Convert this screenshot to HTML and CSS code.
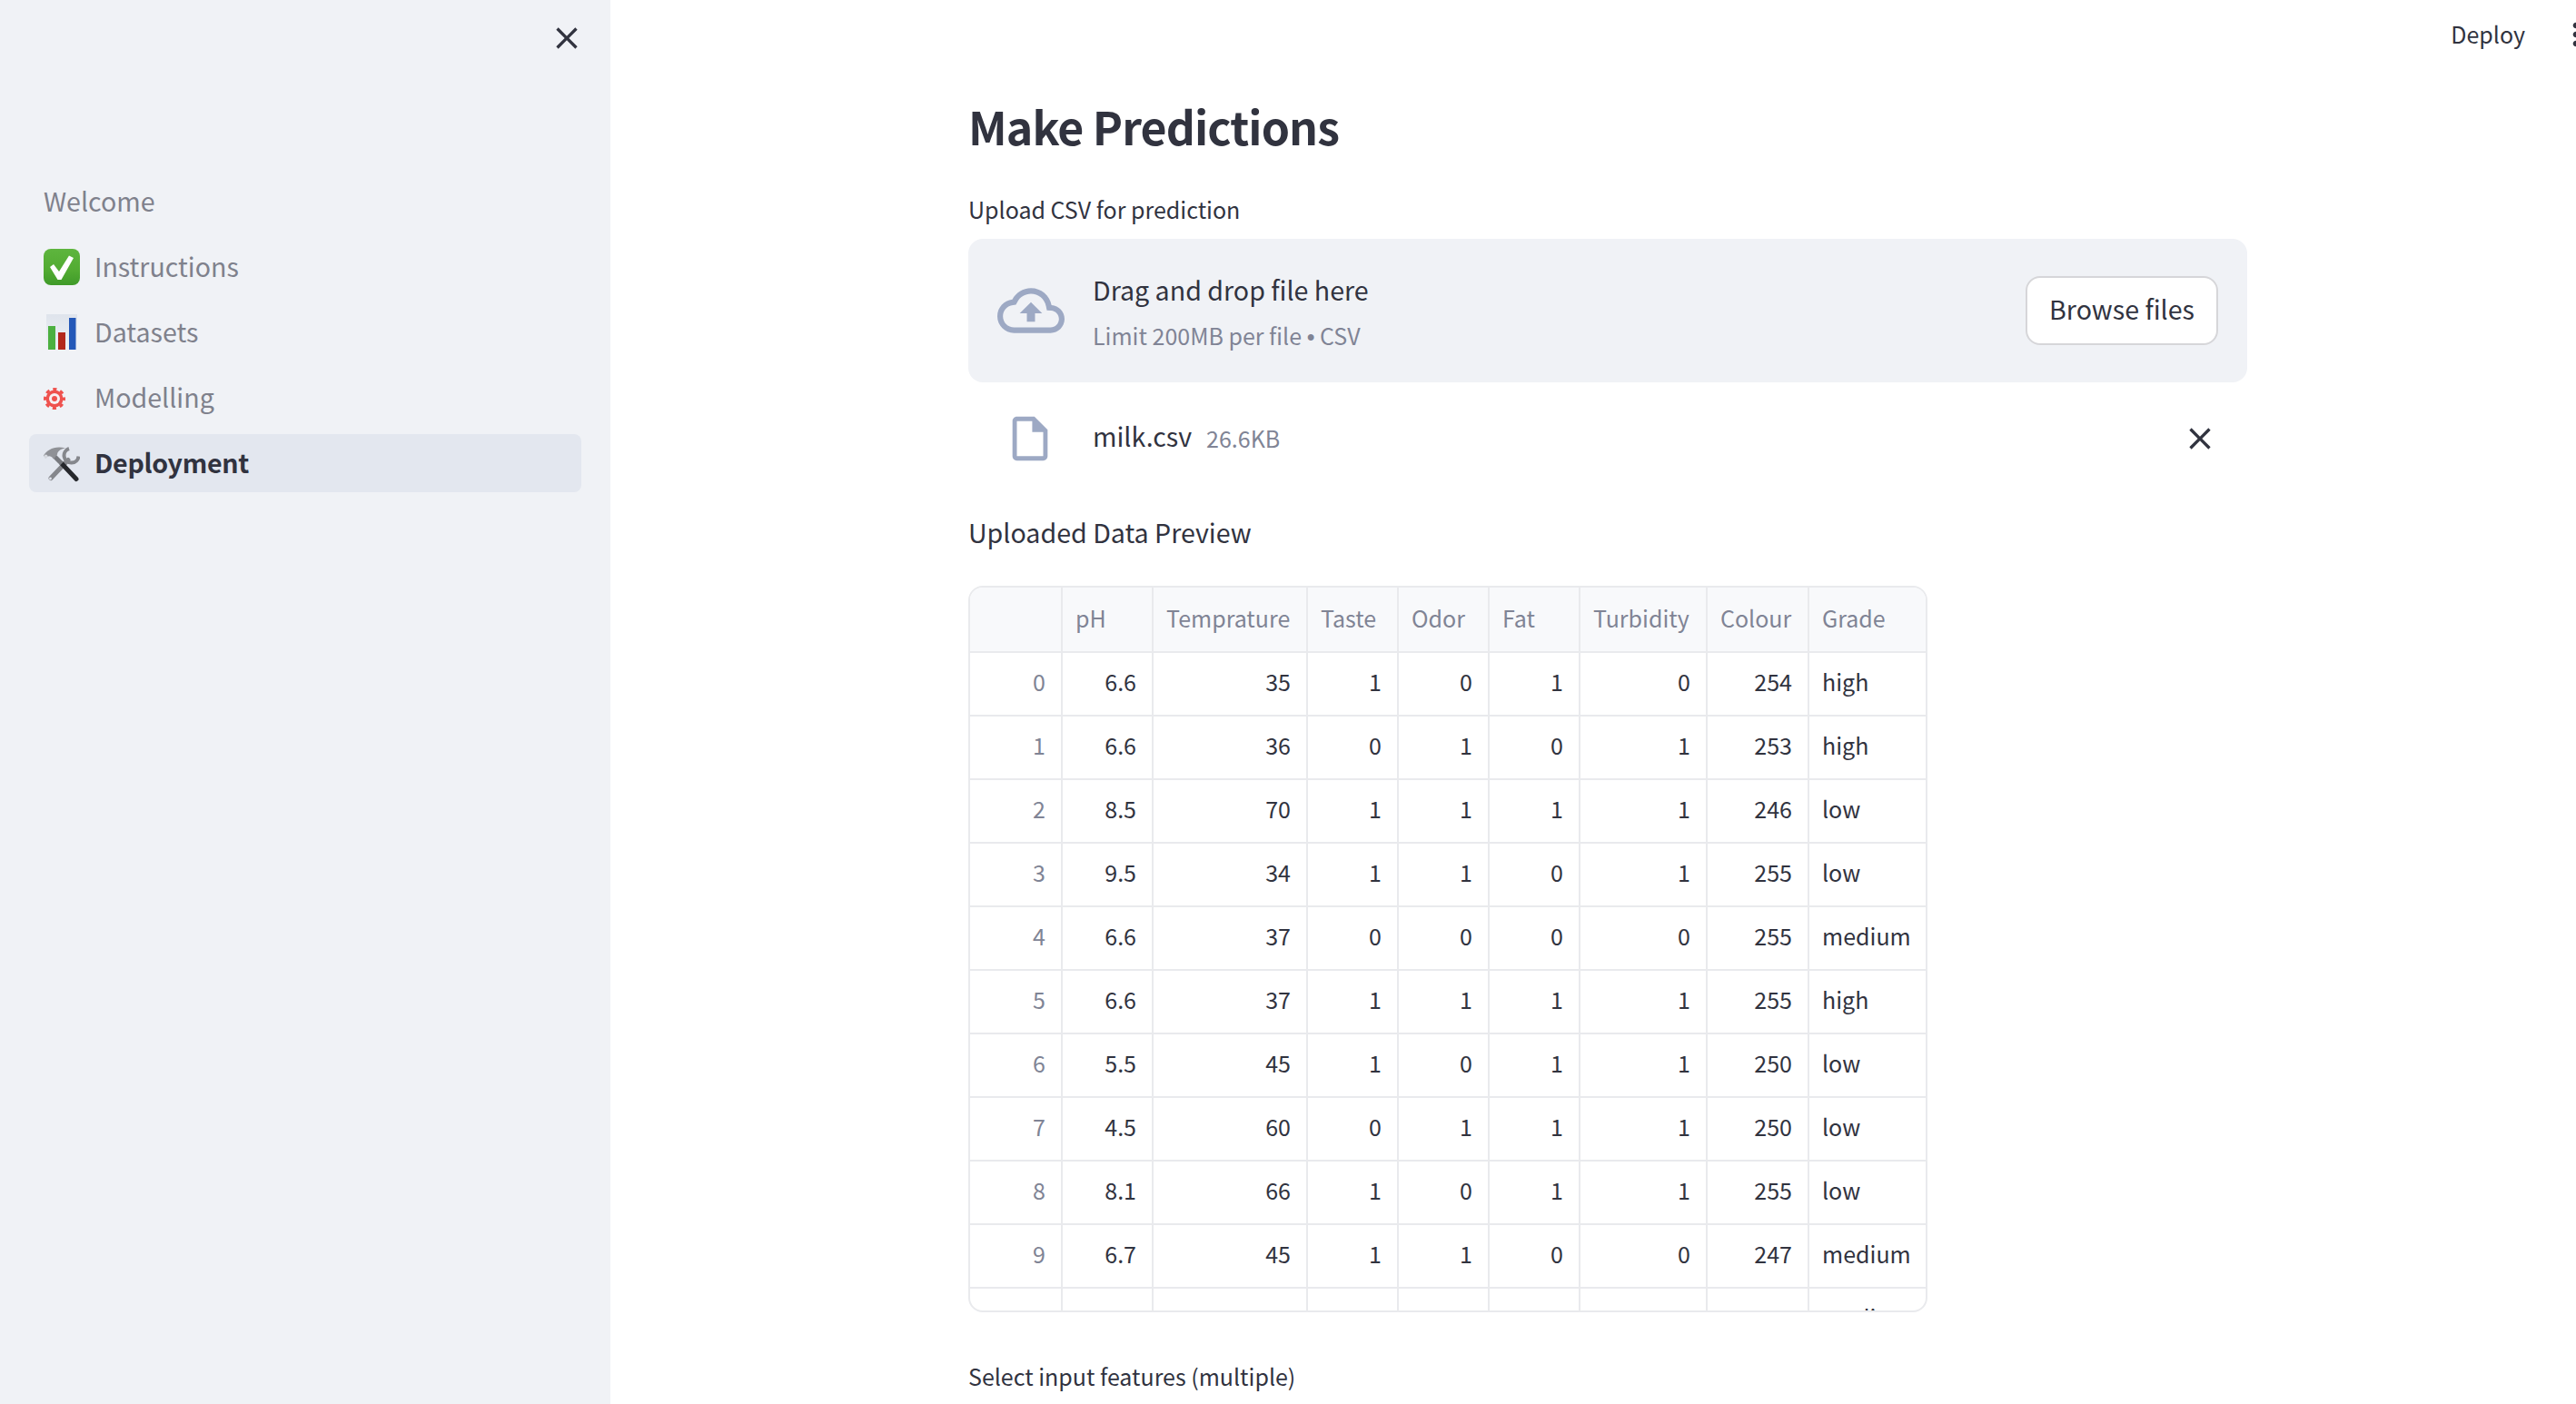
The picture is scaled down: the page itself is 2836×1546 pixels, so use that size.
FILE: index.html

```html
<!DOCTYPE html>
<html lang="en">
<head>
  <meta charset="UTF-8" />
  <title>Make Predictions</title>
  <link rel="stylesheet" href="styles.css">
</head>
<body>
  <div class="app">
    <aside class="sidebar">
      <div class="sidebar-head">
        <svg class="icon-close" viewBox="0 0 24 24"><path d="M19 6.41 17.59 5 12 10.59 6.41 5 5 6.41 10.59 12 5 17.59 6.41 19 12 13.41 17.59 19 19 17.59 13.41 12z"/></svg>
      </div>
      <nav class="nav">
        <a class="nav-item">Welcome</a>
        <a class="nav-item">
          <span class="emoji">
            <svg viewBox="0 0 40 40" width="40" height="40">
              <defs><linearGradient id="checkbg" x1="0" y1="0" x2="0" y2="1"><stop offset="0" stop-color="#5eb53e"/><stop offset="0.6" stop-color="#52ab32"/><stop offset="1" stop-color="#3f9a29"/></linearGradient></defs>
              <rect width="40" height="40" rx="8" fill="url(#checkbg)"/>
              <path d="M7 20l4-3 6 8 11-17.500 5 2.500-13.500 24h-4z" fill="#fff"/>
            </svg>
          </span>
          Instructions
        </a>
        <a class="nav-item">
          <span class="emoji">
            <svg viewBox="0 0 40 40" width="40" height="40">
              <defs><linearGradient id="chartbg" x1="0" y1="0" x2="0" y2="1"><stop offset="0" stop-color="#dfe4ec"/><stop offset="1" stop-color="#eef1f6"/></linearGradient></defs>
              <rect x="3" y="0" width="34" height="39" fill="url(#chartbg)"/>
              <rect x="5" y="13" width="8" height="26" fill="#4cb040"/>
              <rect x="16" y="20" width="8" height="19" fill="#b3281c"/>
              <rect x="28" y="4" width="7.500" height="35" fill="#2458b8"/>
            </svg>
          </span>
          Datasets
        </a>
        <a class="nav-item">
          <span class="emoji">
            <svg viewBox="0 0 40 40" width="40" height="40">
              <circle cx="12" cy="21" r="10.500" fill="none" stroke="#ef524e" stroke-width="3" stroke-dasharray="4.200 4.050" stroke-dashoffset="2.100"/>
              <circle cx="12" cy="21" r="9.500" fill="#ef524e"/>
              <circle cx="12" cy="21" r="6" fill="#f7f1f3"/>
              <circle cx="12" cy="21" r="3" fill="#ef524e"/>
            </svg>
          </span>
          Modelling
        </a>
        <a class="nav-item active">
          <span class="emoji">
            <svg viewBox="0 0 40 40" width="40" height="41">
              <path d="M28 3.500A8 8 0 1 0 38.500 12" fill="none" stroke="#85878c" stroke-width="4"/>
              <line x1="27" y1="16" x2="8" y2="36" stroke="#85878c" stroke-width="5" stroke-linecap="round"/>
              <circle cx="7.500" cy="36.500" r="1.400" fill="#e3e7ef"/>
              <line x1="20" y1="20" x2="36" y2="37" stroke="#26282c" stroke-width="5" stroke-linecap="round"/>
              <line x1="12" y1="12" x2="20" y2="20" stroke="#77797e" stroke-width="5"/>
              <path d="M0 11C4 5 12 0 24 3C18 4 15 7 15 10l-4 5C8 11 5 11 2 14z" fill="#8f9196"/>
              <circle cx="2.500" cy="12" r="2" fill="#d5d8de"/>
            </svg>
          </span>
          Deployment
        </a>
      </nav>
    </aside>

    <main class="main">
      <header class="topbar">
        <span class="deploy">Deploy</span>
        <svg class="icon-more" viewBox="0 0 24 24"><path d="M12 8c1.100 0 2-.9 2-2s-.9-2-2-2-2 .9-2 2 .9 2 2 2zm0 2c-1.100 0-2 .9-2 2s.9 2 2 2 2-.9 2-2-.9-2-2-2zm0 6c-1.100 0-2 .9-2 2s.9 2 2 2 2-.9 2-2-.9-2-2-2z"/></svg>
      </header>

      <section class="content">
        <h1 class="title">Make Predictions</h1>

        <label class="field-label">Upload CSV for prediction</label>
        <div class="dropzone">
          <svg class="icon-cloud" viewBox="0 0 24 24"><path d="M19.35 10.04C18.67 6.59 15.64 4 12 4 9.11 4 6.6 5.64 5.35 8.04 2.34 8.36 0 10.91 0 14c0 3.31 2.69 6 6 6h13c2.76 0 5-2.24 5-5 0-2.64-2.05-4.78-4.65-4.96zM19 18H6c-2.21 0-4-1.79-4-4 0-2.05 1.53-3.76 3.56-3.97l1.07-.11.5-.95C8.08 7.14 9.94 6 12 6c2.62 0 4.88 1.86 5.39 4.43l.3 1.5 1.53.11c1.56.1 2.78 1.41 2.78 2.96 0 1.65-1.35 3-3 3zM8 13h2.55v3h2.9v-3H16l-4-4z"/></svg>
          <div class="drop-text">
            <div class="drop-title">Drag and drop file here</div>
            <div class="drop-hint">Limit 200MB per file <span class="dot">•</span> CSV</div>
          </div>
          <button class="browse">Browse files</button>
        </div>

        <div class="file-row">
          <svg class="icon-file" viewBox="0 0 24 24"><path d="M14 2H6c-1.1 0-1.99.9-1.99 2L4 20c0 1.1.89 2 1.99 2H18c1.1 0 2-.9 2-2V8l-6-6zM6 20V4h7v5h5v11H6z"/></svg>
          <span class="file-name">milk.csv</span>
          <span class="file-size">26.6KB</span>
          <svg class="icon-close file-remove" viewBox="0 0 24 24"><path d="M19 6.41 17.59 5 12 10.59 6.41 5 5 6.41 10.59 12 5 17.59 6.41 19 12 13.41 17.59 19 19 17.59 13.41 12z"/></svg>
        </div>

        <h2 class="preview-title">Uploaded Data Preview</h2>
        <div class="table-wrap">
          <table class="data">
            <colgroup>
              <col class="c-index"><col class="c-ph"><col class="c-temp"><col class="c-small"><col class="c-small"><col class="c-small"><col class="c-turb"><col class="c-colour"><col class="c-grade">
            </colgroup>
            <thead>
              <tr><th></th><th>pH</th><th>Temprature</th><th>Taste</th><th>Odor</th><th>Fat</th><th>Turbidity</th><th>Colour</th><th>Grade</th></tr>
            </thead>
            <tbody>
              <tr><td class="idx">0</td><td>6.6</td><td>35</td><td>1</td><td>0</td><td>1</td><td>0</td><td>254</td><td class="txt">high</td></tr>
              <tr><td class="idx">1</td><td>6.6</td><td>36</td><td>0</td><td>1</td><td>0</td><td>1</td><td>253</td><td class="txt">high</td></tr>
              <tr><td class="idx">2</td><td>8.5</td><td>70</td><td>1</td><td>1</td><td>1</td><td>1</td><td>246</td><td class="txt">low</td></tr>
              <tr><td class="idx">3</td><td>9.5</td><td>34</td><td>1</td><td>1</td><td>0</td><td>1</td><td>255</td><td class="txt">low</td></tr>
              <tr><td class="idx">4</td><td>6.6</td><td>37</td><td>0</td><td>0</td><td>0</td><td>0</td><td>255</td><td class="txt">medium</td></tr>
              <tr><td class="idx">5</td><td>6.6</td><td>37</td><td>1</td><td>1</td><td>1</td><td>1</td><td>255</td><td class="txt">high</td></tr>
              <tr><td class="idx">6</td><td>5.5</td><td>45</td><td>1</td><td>0</td><td>1</td><td>1</td><td>250</td><td class="txt">low</td></tr>
              <tr><td class="idx">7</td><td>4.5</td><td>60</td><td>0</td><td>1</td><td>1</td><td>1</td><td>250</td><td class="txt">low</td></tr>
              <tr><td class="idx">8</td><td>8.1</td><td>66</td><td>1</td><td>0</td><td>1</td><td>1</td><td>255</td><td class="txt">low</td></tr>
              <tr><td class="idx">9</td><td>6.7</td><td>45</td><td>1</td><td>1</td><td>0</td><td>0</td><td>247</td><td class="txt">medium</td></tr>
              <tr><td class="idx">10</td><td>6.7</td><td>45</td><td>1</td><td>1</td><td>1</td><td>0</td><td>245</td><td class="txt">medium</td></tr>
            </tbody>
          </table>
        </div>

        <label class="field-label select-label">Select input features (multiple)</label>
      </section>
    </main>
  </div>
</body>
</html>
```

FILE: styles.css

```css
html, body {
  margin: 0;
  height: 100%;
  overflow: hidden;
}
body {
  font-family: "Noto Sans CJK SC", "Noto Sans", sans-serif;
  color: #31333f;
  background: #fff;
}
.app {
  display: flex;
  height: 100vh;
}

/* sidebar */
.sidebar {
  width: 672px;
  flex: none;
  background: #f0f2f6;
}
.sidebar-head {
  display: flex;
  justify-content: flex-end;
  padding: 22px 28px 0;
}
.icon-close {
  width: 40px;
  height: 40px;
  fill: #31333f;
  display: block;
}
.nav {
  display: flex;
  flex-direction: column;
  gap: 8px;
  margin: 128px 32px 0;
}
.nav-item {
  display: flex;
  align-items: center;
  box-sizing: border-box;
  height: 64px;
  padding: 0 16px 2px;
  border-radius: 8px;
  font-size: 28.6px;
  line-height: 44px;
  color: #7f818c;
}
.nav-item.active {
  background: #e3e7ef;
  color: #31333f;
  font-weight: 600;
  letter-spacing: -0.3px;
}
.emoji {
  width: 40px;
  height: 40px;
  margin: 2px 16px 0 0;
  flex: none;
}
.emoji svg {
  display: block;
}

/* main */
.main {
  flex: 1;
  min-width: 0;
}
.topbar {
  display: flex;
  justify-content: flex-end;
  align-items: center;
  height: 76px;
  margin-right: -20px;
}
.deploy {
  font-size: 25px;
  line-height: 40px;
  padding-bottom: 2px;
}
.icon-more {
  width: 40px;
  height: 40px;
  fill: #31333f;
  margin-left: 36px;
}
.content {
  width: 1408px;
  margin-left: 394px;
  padding-top: 26px;
}
.title {
  margin: 0 0 36px;
  font-size: 50px;
  line-height: 72px;
  font-weight: 600;
  letter-spacing: -0.9px;
}
.field-label {
  display: block;
  font-size: 25px;
  line-height: 40px;
}

/* uploader */
.dropzone {
  display: flex;
  align-items: center;
  height: 158px;
  margin-top: 13px;
  padding: 0 32px;
  box-sizing: border-box;
  background: #f0f2f6;
  border-radius: 16px;
}
.icon-cloud {
  width: 74px;
  height: 74px;
  fill: #9da9c4;
  flex: none;
}
.drop-text {
  flex: 1;
  margin-left: 31px;
  padding-top: 4px;
}
.drop-title {
  font-size: 28.6px;
  line-height: 44px;
}
.drop-hint {
  margin-top: 8px;
  font-size: 25px;
  line-height: 40px;
  color: #808495;
}
.dot {
  font-family: "Liberation Sans", sans-serif;
}
.browse {
  width: 212px;
  height: 76px;
  padding: 0 0 6px;
  background: #fff;
  border: 2px solid #d6d6d9;
  border-radius: 16px;
  font: inherit;
  font-size: 28.6px;
  color: #31333f;
}

.file-row {
  display: flex;
  align-items: center;
  height: 60px;
  margin-top: 32px;
  padding: 0 32px 0 39px;
}
.icon-file {
  width: 58px;
  height: 58px;
  fill: #9da9c4;
  flex: none;
  margin-right: 40px;
}
.file-name {
  margin-bottom: 7px;
  font-size: 28.6px;
  line-height: 44px;
}
.file-size {
  margin-left: 16px;
  margin-bottom: 2px;
  font-size: 25px;
  line-height: 40px;
  color: #808495;
}
.file-remove {
  margin-left: auto;
}

/* table */
.preview-title {
  margin: 51px 0 37px;
  font-size: 28.6px;
  line-height: 44px;
  font-weight: 400;
}
.table-wrap {
  width: 1056px;
  height: 800px;
  box-sizing: border-box;
  border: 2px solid #e9eaed;
  border-radius: 16px;
  overflow: hidden;
}
.data {
  width: 1052px;
  table-layout: fixed;
  border-collapse: separate;
  border-spacing: 0;
  font-size: 25px;
}
.c-index { width: 102px; }
.c-ph { width: 100px; }
.c-temp { width: 170px; }
.c-small { width: 100px; }
.c-turb { width: 140px; }
.c-colour { width: 112px; }
.c-grade { width: 128px; }
.data th,
.data td {
  box-sizing: border-box;
  height: 70px;
  padding: 0 17px 6px 14px;
  border-right: 2px solid #e9eaed;
  border-bottom: 2px solid #e9eaed;
  text-align: right;
  white-space: nowrap;
  overflow: hidden;
}
.data th {
  height: 72px;
  padding: 0 14px 4px;
  background: #f8f9fb;
  color: #808495;
  font-weight: 400;
  text-align: left;
}
.data th:last-child,
.data td:last-child {
  border-right: none;
}
.data td.idx {
  color: #808495;
}
.data td.txt {
  text-align: left;
  padding: 0 14px 6px;
}
.select-label {
  margin-top: 50px;
}
```
